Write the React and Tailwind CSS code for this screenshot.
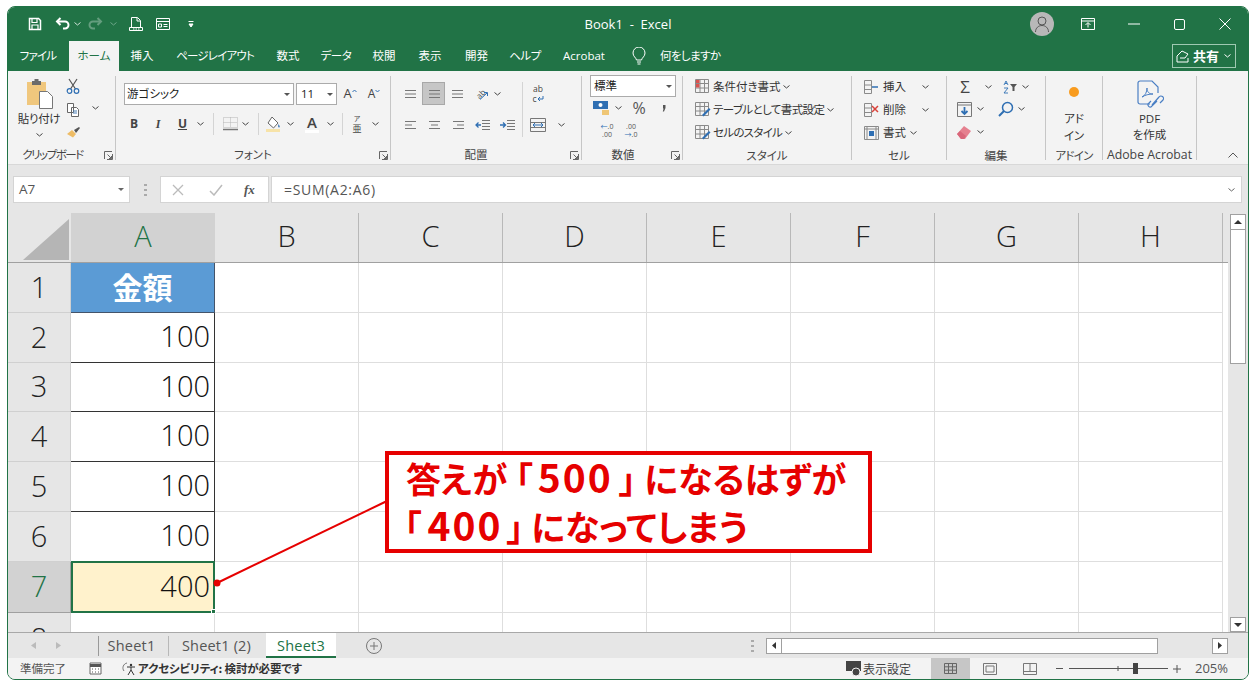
import clsx from 'clsx';

const UI_FONT = "font-['Open_Sans','Noto_Sans_CJK_JP',sans-serif]";
const JP_FONT = "font-['Noto_Sans_CJK_JP',sans-serif]";

const TABS = [
  { t: 'ファイル', w: 'w-[56px] tracking-[-0.8px]' },
  { t: 'ホーム', w: 'w-[50px] ml-[3px] bg-[#f3f3f3] text-[#217346]' },
  { t: '挿入', w: 'w-[46px]' },
  { t: 'ページレイアウト', w: 'w-[100px] tracking-[-0.8px]' },
  { t: '数式', w: 'w-[46px]' },
  { t: 'データ', w: 'w-[50px] tracking-[-0.4px]' },
  { t: '校閲', w: 'w-[46px]' },
  { t: '表示', w: 'w-[46px]' },
  { t: '開発', w: 'w-[47px]' },
  { t: 'ヘルプ', w: 'w-[50px] tracking-[-0.4px]' },
  { t: 'Acrobat', w: 'w-[68px]' },
];
const COLS = ['B', 'C', 'D', 'E', 'F', 'G', 'H'];
const ROWS = [
  { n: 1, h: 'h-[50px]' }, { n: 2, h: 'h-[50px]' }, { n: 3, h: 'h-[49px]' }, { n: 4, h: 'h-[50px]' },
  { n: 5, h: 'h-[50px]' }, { n: 6, h: 'h-[50px]' }, { n: 7, h: 'h-[51px]' },
];
const STYLE_ROWS = [
  { t: '条件付き書式', cond: true, c: '' },
  { t: 'テーブルとして書式設定', cond: false, c: 'tracking-[-0.6px]' },
  { t: 'セルのスタイル', cond: false, c: 'tracking-[-0.7px]' },
];

function Svg({ w = 16, h = 16, children, className }) {
  return <svg width={w} height={h} viewBox={`0 0 ${w} ${h}`} fill="none" className={clsx('shrink-0', className)}>{children}</svg>;
}
function Chev({ className, color = '#444' }) {
  return (
    <span className={clsx('flex items-center justify-center shrink-0 w-[10px]', className)}>
      <svg width="7" height="4" viewBox="0 0 7 4" fill="none"><path d="M.5.5l3 2.5 3-2.5" stroke={color} strokeWidth="1" /></svg>
    </span>
  );
}
function Slot({ className, children }) {
  return <span className={clsx('flex items-center justify-center shrink-0', className)}>{children}</span>;
}
function Launcher() {
  return (
    <svg width="9" height="9" viewBox="0 0 9 9" fill="none" className="absolute right-[2px] bottom-[4px]">
      <path d="M.5 8V.5H8M8.5 3v5.5H3M3.5 3.5l4 4M5 7.5h2.5V5" stroke="#666" strokeWidth="1" />
    </svg>
  );
}
function Group({ className, label, launcher, children }) {
  return (
    <div className={clsx('relative flex flex-col shrink-0', className)}>
      <div className="h-[73px]">{children}</div>
      <div className="h-[21px] text-center text-[11.5px] leading-[24px] text-[#444] whitespace-nowrap">{label}</div>
      {launcher && <Launcher />}
    </div>
  );
}
const Sep = () => <div className="w-px h-[84px] self-center shrink-0 bg-[#c6c6c6]" />;
const MiniSep = ({ className }) => <div className={clsx('w-px h-[22px] shrink-0 bg-[#d4d4d4]', className)} />;

function Lines({ a = 2, b = 11, c = 2, d = 11, e = 2, f = 11 }) {
  return (
    <Svg w={14} h={12}>
      <path d={`M${a} 2.5h${b}M${c} 6h${d}M${e} 9.5h${f}`} stroke="#777" strokeWidth="1.2" />
    </Svg>
  );
}

function QuickBar() {
  return (
    <div className="flex items-center pl-[19px]">
      <Svg w={16} h={16}>
        <path d="M2.5 2.5h9l2 2v9h-11z" stroke="#fff" strokeWidth="1.5" />
        <path d="M5 3v3.5h5V3M5 13v-4h6v4" stroke="#fff" strokeWidth="1.2" />
      </Svg>
      <Svg w={16} h={16} className="ml-[12px]">
        <path d="M5.5 2L2 5.5 5.5 9" stroke="#fff" strokeWidth="2" />
        <path d="M2.5 5.5H10a3.5 3.5 0 010 7H8" stroke="#fff" strokeWidth="2" />
      </Svg>
      <Chev color="#cfe3d8" className="ml-[1px]" />
      <Svg w={16} h={16} className="ml-[5px] opacity-30">
        <path d="M10.5 2L14 5.5 10.5 9" stroke="#fff" strokeWidth="2" />
        <path d="M13.5 5.5H6a3.5 3.5 0 000 7h2" stroke="#fff" strokeWidth="2" />
      </Svg>
      <Chev color="#6fa78a" className="ml-[5px]" />
      <Svg w={16} h={16} className="ml-[10px]">
        <path d="M3.5 11V1.5h6l3 3V11M9 2v3h3" stroke="#fff" strokeWidth="1" />
        <path d="M1.5 11.5h13v3h-13z" stroke="#fff" strokeWidth="1" />
        <path d="M5 13h1.5M7.5 13h1.5M10 13h1.5" stroke="#fff" strokeWidth="1" />
      </Svg>
      <Svg w={16} h={14} className="ml-[11px]">
        <path d="M1.5 1.5h13v11h-13zM1.5 4.5h13M3.5 7h3v3h-3zM8.5 7.500h4M8.500 9.500h4" stroke="#fff" strokeWidth="1" />
      </Svg>
      <Svg w={6} h={8} className="ml-[17px]">
        <path d="M.5 1.500h5M1 4h4l-2 3z" stroke="#fff" strokeWidth="1" fill="#fff" />
      </Svg>
    </div>
  );
}

function WindowButtons() {
  return (
    <div className="flex items-center justify-end">
      <div className="w-[24px] h-[24px] rounded-full bg-[#b8b8b8] flex items-center justify-center mr-[27px]">
        <Svg w={16} h={18}>
          <circle cx="8" cy="6" r="4" stroke="#555" strokeWidth="1" />
          <path d="M1.500 17c0-4 3-6.500 6.500-6.500s6.500 2.500 6.500 6.500" stroke="#555" strokeWidth="1" />
        </Svg>
      </div>
      <Svg w={14} h={12} className="mr-[33px]">
        <path d="M.5.5h13v11H.5zM.5 3h13" stroke="#fff" strokeWidth="1" />
        <path d="M7 9.500V5M4.500 7L7 4.500 9.500 7" stroke="#fff" strokeWidth="1" />
      </Svg>
      <Svg w={12} h={2} className="mr-[34px]"><path d="M0 1h12" stroke="#fff" /></Svg>
      <Svg w={11} h={11} className="mr-[34px]"><rect x=".5" y=".5" width="10" height="10" rx="1.500" stroke="#fff" /></Svg>
      <Svg w={12} h={12} className="mr-[17px]"><path d="M.5.5l11 11M11.500.5l-11 11" stroke="#fff" /></Svg>
    </div>
  );
}

function ClipboardGroup() {
  return (
    <Group className="w-[107px]" label={<span className="inline-block pr-[18px] tracking-[-1.5px]">クリップボード</span>} launcher>
      <div className="flex pt-[7px]">
        <div className="ml-[9px] w-[44px] flex flex-col items-center">
          <Svg w={28} h={31} className="ml-[1px]">
            <path d="M1 4h19v23H1z" fill="#f0c77d" />
            <path d="M6 3h9v4H6z" fill="#6b6b6b" />
            <path d="M8.500 1h4v3h-4z" fill="#6b6b6b" />
            <path d="M13.500 13.500h8l5 5v12h-13z" fill="#fff" stroke="#777" />
          </Svg>
          <span className="text-[11.5px] leading-[15px] text-[#333] whitespace-nowrap mt-[2px] tracking-[-0.3px]">貼り付け</span>
          <Chev className="mt-[7px]" />
        </div>
        <div className="ml-[2px] w-[20px] flex flex-col items-center gap-[9px]">
          <Svg w={14} h={16}>
            <path d="M3 1l6.500 10M11 1L4.500 11" stroke="#555" strokeWidth="1.200" />
            <circle cx="3.500" cy="13" r="2.300" stroke="#2f6fb3" strokeWidth="1.200" />
            <circle cx="10.500" cy="13" r="2.300" stroke="#2f6fb3" strokeWidth="1.200" />
          </Svg>
          <Svg w={14} h={14}>
            <path d="M1.500.5h6v9h-6zM5.500 4.500h5l2 2v7h-7z" fill="#fff" stroke="#666" />
            <path d="M7 8h4M7 10h4" stroke="#4a7fb5" />
          </Svg>
          <Svg w={15} h={12}>
            <path d="M1 8l5-4 4 4-3 3.500z" fill="#eebc65" />
            <path d="M8 4l5-3 1 1-4 5z" fill="#555" />
          </Svg>
        </div>
        <Chev className="ml-[7px] h-[4px] mt-[28px]" />
      </div>
    </Group>
  );
}

function FontSelect({ className, label }) {
  return (
    <div className={clsx('h-[22px] bg-white border border-[#ababab] flex items-center justify-between pl-[2px] pr-[3px] shrink-0', className)}>
      <span className="text-[11.500px] text-[#222]">{label}</span>
      <svg width="6" height="3" viewBox="0 0 6 3"><path d="M0 0h6L3 3z" fill="#555" /></svg>
    </div>
  );
}

function FontGroup() {
  return (
    <Group className="w-[274px]" label="フォント" launcher>
      <div className="flex items-center pl-[8px] pt-[12px]">
        <FontSelect className="w-[170px]" label="游ゴシック" />
        <FontSelect className="w-[41px] ml-[2px] pl-[4px]" label="11" />
        <Slot className="w-[24px] ml-[1px] text-[13px] text-[#444]">
          A
          <Svg w={5} h={10}><path d="M.5 3L2.500 1l2 2" stroke="#2f6fb3" /></Svg>
        </Slot>
        <Slot className="w-[24px] text-[12px] text-[#444]">
          A
          <Svg w={5} h={10}><path d="M.5 1l2 2 2-2" stroke="#2f6fb3" /></Svg>
        </Slot>
      </div>
      <div className="flex items-center pl-[6px] mt-[8px] h-[22px] text-[#444]">
        <Slot className="w-[24px] text-[12px] font-bold">B</Slot>
        <Slot className="w-[24px] text-[12px] italic font-bold font-['Liberation_Serif',serif]">I</Slot>
        <Slot className="w-[25px] text-[12px] font-bold underline">U</Slot>
        <Chev />
        <MiniSep className="ml-[8px]" />
        <Slot className="w-[20px] ml-[6px]">
          <Svg w={15} h={14}>
            <path d="M.5.500h14v10H.5zM7.500.500v10M.5 5.500h14" stroke="#b4b4b4" strokeDasharray="1 1" />
            <path d="M0 12.500h15" stroke="#777" strokeWidth="1.500" />
          </Svg>
        </Slot>
        <Chev />
        <MiniSep className="ml-[8px]" />
        <Slot className="w-[20px] ml-[4px]">
          <Svg w={17} h={17}>
            <path d="M7 1l6 6-4.500 5L3 7z" fill="#fff" stroke="#666" />
            <path d="M13.500 8c1.500 2 1.500 3.500.5 3.500S13 10 13.500 8z" fill="#2f6fb3" />
            <path d="M1 14.500h14" stroke="#f7e3a8" strokeWidth="3" />
          </Svg>
        </Slot>
        <Chev className="ml-[2px]" />
        <Slot className="w-[20px] ml-[7px] flex-col">
          <span className="text-[15px] leading-[15px] font-semibold">A</span>
          <span className="w-[14px] h-[3px] bg-white" />
        </Slot>
        <Chev className="ml-[3px]" />
        <MiniSep className="ml-[7px]" />
        <Slot className="w-[20px] ml-[4px] flex-col">
          <span className="text-[7px] leading-[9px]">ア</span>
          <span className="text-[9px] leading-[11px]">亜</span>
        </Slot>
        <Chev className="ml-[3px]" />
      </div>
    </Group>
  );
}

function IndentIcon({ flip }) {
  return (
    <Svg w={15} h={12}>
      <path d="M7 1.500h8M7 4.500h8M7 7.500h8M7 10.500h8" stroke="#777" />
      <path d={flip ? 'M0 6h5M3 3.500L5.500 6 3 8.500' : 'M1 6h5M3.500 3.500L1 6l2.500 2.500'} stroke="#2f6fb3" strokeWidth="1.300" />
    </Svg>
  );
}

function AlignGroup() {
  return (
    <Group className="w-[190px]" label={<span className="inline-block pr-[20px]">配置</span>} launcher>
      <div className="flex items-start pt-[11px] pl-[7px]">
        <div className="flex flex-col">
          <div className="flex items-center h-[23px]">
            <Slot className="w-[24px]"><Lines /></Slot>
            <Slot className="w-[23px] h-[23px] bg-[#c6c6c6] border border-[#a8a8a8]"><Lines /></Slot>
            <Slot className="w-[24px]"><Lines /></Slot>
            <Slot className="w-[24px]">
              <span className="relative flex items-center justify-center w-[16px] h-[14px]">
                <span className="-rotate-45 text-[8px] leading-none text-[#555]">ab</span>
                <Svg w={16} h={14} className="absolute left-0 top-0"><path d="M7 12.500L14 6M11 5.500h3.500V9" stroke="#2f6fb3" /></Svg>
              </span>
            </Slot>
            <Chev className="-ml-[1px]" />
          </div>
          <div className="flex items-center h-[23px] mt-[8px]">
            <Slot className="w-[24px]"><Lines b={11} d={7} f={11} /></Slot>
            <Slot className="w-[24px]"><Lines c={4} d={7} /></Slot>
            <Slot className="w-[24px]"><Lines c={6} d={7} /></Slot>
            <Slot className="w-[25px]"><IndentIcon /></Slot>
            <Slot className="w-[24px]"><IndentIcon flip /></Slot>
          </div>
        </div>
        <div className="w-px h-[55px] bg-[#d4d4d4] ml-[3px] shrink-0" />
        <div className="flex flex-col ml-[5px]">
          <Slot className="w-[20px] h-[23px] flex-col text-[8.500px] leading-[10px] text-[#444]">
            <span>ab</span>
            <span className="flex items-center">
              c
              <Svg w={7} h={7}><path d="M6 1v3H1M3 2L1 4l2 2" stroke="#2f6fb3" /></Svg>
            </span>
          </Slot>
          <div className="flex items-center h-[23px] mt-[8px]">
            <Slot className="w-[20px]">
              <Svg w={16} h={14}><path d="M.5.500h15v13H.5zM.5 4.500h15M.5 9.500h15" stroke="#777" /><path d="M3 7h10M5 5l-2 2 2 2M11 5l2 2-2 2" stroke="#2f6fb3" /></Svg>
            </Slot>
            <Chev className="ml-[8px]" />
          </div>
        </div>
      </div>
    </Group>
  );
}

function NumberGroup() {
  return (
    <Group className="w-[100px]" label={<span className="inline-block pr-[18px]">数値</span>} launcher>
      <div className="pt-[4px] pl-[8px]">
        <FontSelect className="w-[86px] pl-[3px]" label="標準" />
        <div className="flex items-center h-[20px] mt-[1px] -ml-[7px]">
          <Slot className="w-[20px] ml-[8px]">
            <Svg w={17} h={16}>
              <path d="M0 1h15v8H0z" fill="#2f6fb3" />
              <circle cx="7.500" cy="5" r="2" fill="#fff" />
              <path d="M9 10h7v5H9z" fill="#efc675" />
            </Svg>
          </Slot>
          <Chev className="ml-[2px]" />
          <Slot className="w-[20px] ml-[6px] text-[16px] text-[#555]">%</Slot>
          <Slot className="w-[14px] ml-[8px]">
            <Svg w={4} h={7}><path d="M1 0h2.500v3L2 6.500H.8L1.600 3.500H1z" fill="#555" /></Svg>
          </Slot>
        </div>
        <div className="flex items-center h-[20px] mt-[3px] text-[7px] leading-[8px] text-[#555] -ml-[7px]">
          <Slot className="w-[20px] ml-[14px] flex-col"><span><span className="text-[#2f6fb3]">←</span>.0</span><span>.00</span></Slot>
          <Slot className="w-[20px] ml-[4px] flex-col"><span>.00</span><span><span className="text-[#2f6fb3]">→</span>.0</span></Slot>
        </div>
      </div>
    </Group>
  );
}

function StyleIcon({ cond }) {
  return (
    <Svg w={16} h={15}>
      <path d="M.5.500h13v13H.5zM.5 4.500h13M.5 9h13M5 .500v13M9.500.500v13" stroke="#8a8a8a" />
      {cond ? <path d="M1 1h3.500v3H1zM1 5h3.500v3.500H1z" fill="#d9534f" /> : <path d="M7 13l7-7 1.500 1.500-7 7z" fill="#2f6fb3" />}
    </Svg>
  );
}

function StyleGroup() {
  return (
    <Group className="w-[168px]" label="スタイル">
      <div className="flex flex-col pt-[4px] pl-[12px] text-[11.500px] text-[#333]">
        {STYLE_ROWS.map((r) => (
          <div key={r.t} className="flex items-center h-[23px] whitespace-nowrap">
            <StyleIcon cond={r.cond} />
            <span className={clsx('ml-[2px]', r.c)}>{r.t}</span>
            <Chev className="ml-[1px]" />
          </div>
        ))}
      </div>
    </Group>
  );
}

function CellGroup() {
  return (
    <Group className="w-[94px]" label="セル">
      <div className="flex flex-col pt-[4px] pl-[12px] text-[11.500px] text-[#333]">
        <div className="flex items-center h-[23px]">
          <Svg w={15} h={14}><path d="M.5.500h7v13h-7zM.5 5h7M.5 9.500h7" stroke="#8a8a8a" /><path d="M8 7h6" stroke="#2f6fb3" strokeWidth="1.500" /></Svg>
          <span className="ml-[4px]">挿入</span><Chev className="ml-[14px]" />
        </div>
        <div className="flex items-center h-[23px]">
          <Svg w={15} h={14}><path d="M.5.500h7v13h-7zM.5 5h7M.5 9.500h7" stroke="#8a8a8a" /><path d="M8 3l6 6M14 3L8 9" stroke="#d9433b" strokeWidth="1.500" /></Svg>
          <span className="ml-[4px]">削除</span><Chev className="ml-[14px]" />
        </div>
        <div className="flex items-center h-[23px]">
          <Svg w={15} h={14}><path d="M.5.500h14v13H.5zM.5 3h14M3 .500v13M12 .500v13" stroke="#8a8a8a" /><path d="M5 5h5v5H5z" fill="#2f6fb3" /></Svg>
          <span className="ml-[4px]">書式</span><Chev className="ml-[2px]" />
        </div>
      </div>
    </Group>
  );
}

function EditGroup() {
  return (
    <Group className="w-[98px]" label="編集">
      <div className="flex flex-col pt-[4px] pl-[10px]">
        <div className="flex items-center h-[23px]">
          <Slot className="w-[16px] text-[17px] leading-none text-[#444]">Σ</Slot>
          <Chev className="ml-[10px]" />
          <Svg w={16} h={14} className="ml-[10px]">
            <path d="M1 5l2-4 2 4M2 3.500h2M1 8h4l-4 5h4" stroke="#2f6fb3" strokeWidth=".9" />
            <path d="M7 4h7l-2.500 3v4h-2V7z" fill="#555" />
          </Svg>
          <Chev className="ml-[1px]" />
        </div>
        <div className="flex items-center h-[22px]">
          <Svg w={15} h={15}>
            <path d="M.5.500h14v14H.5z" stroke="#777" />
            <path d="M.5 3h14" stroke="#777" />
            <path d="M7.500 5v7M4.500 9l3 3 3-3" stroke="#2f6fb3" strokeWidth="1.800" />
          </Svg>
          <Chev className="ml-[3px]" />
          <Svg w={16} h={16} className="ml-[13px]">
            <circle cx="9.500" cy="6.500" r="5" stroke="#2f6fb3" strokeWidth="1.500" />
            <path d="M6 10l-5 5" stroke="#2f6fb3" strokeWidth="2" />
          </Svg>
          <Chev className="ml-[2px]" />
        </div>
        <div className="flex items-center h-[24px]">
          <Svg w={15} h={13}>
            <path d="M0 8l7-8 7 5-6 8H4z" fill="#e5808f" />
            <path d="M0 8l3-3 6 5-2 3H4z" fill="#d9667a" />
          </Svg>
          <Chev className="ml-[3px]" />
        </div>
      </div>
    </Group>
  );
}

function AddinGroup() {
  return (
    <Group className="w-[56px]" label={<span className="tracking-[-0.8px]">アドイン</span>}>
      <div className="flex flex-col items-center text-[11.500px] leading-[17px] text-[#333]">
        <span className="w-[10px] h-[10px] rounded-full bg-[#f89b1e] mt-[16px] mb-[13px]" />
        <span>アド</span>
        <span>イン</span>
      </div>
    </Group>
  );
}

function AcrobatGroup() {
  return (
    <Group className="w-[93px]" label={<span className={clsx(UI_FONT, 'text-[12.300px]')}>Adobe Acrobat</span>}>
      <div className="flex flex-col items-center text-[11.500px] leading-[16px] text-[#333]">
        <Svg w={27} h={29} className="mt-[9px] mb-[2px] ml-[2px]">
          <path d="M13 24H3a2 2 0 01-2-2V3a2 2 0 012-2h12l6 6v6" stroke="#4a7fc4" strokeWidth="1.200" />
          <path d="M5 17c3-1 5-5 5-9 0 4 2 6 6 6-4 0-8 1-11 3z" stroke="#4a7fc4" />
          <path d="M15 25l7-8a2.500 2.500 0 014 3l-3 3M20 21l-6 6a2.500 2.500 0 01-3-3l3-3" stroke="#4a7fc4" strokeWidth="1.200" />
        </Svg>
        <span className={UI_FONT}>PDF</span>
        <span>を作成</span>
      </div>
    </Group>
  );
}

function FormulaBar() {
  return (
    <div className="h-[48px] bg-[#e6e6e6] flex pt-[11px] pl-[5px] pr-[6px] shrink-0">
      <div className="w-[117px] h-[27px] bg-white border border-[#d4d4d4] flex items-center justify-between px-[5px] text-[13.500px] text-[#555]">
        <span>A7</span>
        <svg width="6" height="3" viewBox="0 0 6 3"><path d="M0 0h6L3 3z" fill="#666" /></svg>
      </div>
      <div className="w-[30px] h-[27px] flex items-center justify-center">
        <svg width="3" height="12" viewBox="0 0 3 12"><path d="M0 0h3v2H0zM0 5h3v2H0zM0 10h3v2H0z" fill="#aaa" /></svg>
      </div>
      <div className="w-[109px] h-[27px] bg-white border border-[#d4d4d4] flex items-center">
        <Svg w={12} h={12} className="ml-[11px]"><path d="M1 1l10 10M11 1L1 11" stroke="#bbb" strokeWidth="1.300" /></Svg>
        <Svg w={14} h={12} className="ml-[25px]"><path d="M1 7l4 4 8-10" stroke="#bbb" strokeWidth="1.500" /></Svg>
        <span className="ml-[21px] text-[13px] italic font-bold text-[#555] font-['Liberation_Serif',serif]">fx</span>
      </div>
      <div className="flex-1 h-[27px] ml-[2px] bg-white border border-[#d4d4d4] flex items-center justify-between pl-[12px] pr-[5px] text-[14px] tracking-[0.7px] text-[#555]">
        <span>=SUM(A2:A6)</span>
        <Chev color="#666" />
      </div>
    </div>
  );
}

function Callout() {
  return (
    <div className={clsx('absolute left-[377px] top-[238px] w-[487px] h-[102px] bg-white border-4 border-[#e60000] pl-[17px] text-[#e60000] text-[35px] leading-[46px] font-bold whitespace-nowrap', JP_FONT)}>
      <div className="-mt-[2px]">
        答えが<span className="ml-[8px]">「</span>
        <span className="ml-[5px] text-[39px] tracking-[2px]">500</span>
        <span className="ml-[6px]">」</span>
        <span className="ml-[8px]">になるはずが</span>
      </div>
      <div className="-ml-[2px]">
        「<span className="ml-[6px] text-[39px] tracking-[2px]">400</span>
        <span className="ml-[4px]">」</span>
        <span className="ml-[7px]">になってしまう</span>
      </div>
    </div>
  );
}

function SheetGrid() {
  return (
    <div className="relative flex-1 min-w-0 bg-white overflow-hidden">
      <div className="flex h-[50px] bg-[#e6e6e6] text-[29px] font-light text-[#222] border-b border-[#a0a0a0]">
        <div className="w-[63px] flex items-end justify-end pr-[2px] pb-[2px] shrink-0">
          <svg width="46" height="41" viewBox="0 0 46 41"><path d="M0 41L46 0v41z" fill="#b5b5b5" /></svg>
        </div>
        <div className="w-[144px] pb-[3px] bg-[#d2d2d2] text-[#217346] flex items-center justify-center shrink-0">A</div>
        {COLS.map((c) => (
          <div key={c} className="w-[144px] pb-[3px] flex items-center justify-center border-r border-[#b8b8b8] shrink-0">{c}</div>
        ))}
      </div>
      {ROWS.map((r) => (
        <div key={r.n} className={clsx('flex', r.h)}>
          <div className={clsx('w-[63px] pb-[2px] flex items-center justify-center shrink-0 text-[29px] font-light border-r border-b',
            r.n === 7 ? 'bg-[#d2d2d2] text-[#217346] border-[#a0a0a0]' : 'bg-[#e6e6e6] text-[#222] border-[#d0d0d0]')}>{r.n}</div>
          {r.n === 1 && (
            <div className={clsx('w-[144px] shrink-0 pb-[2px] flex items-center justify-center bg-[#5b9bd5] text-white text-[30px] font-bold border-r border-b border-[#44546a]', JP_FONT)}>金額</div>
          )}
          {r.n > 1 && r.n < 7 && (
            <div className="w-[144px] shrink-0 pb-[3px] flex items-center justify-end pr-[4px] text-[29px] font-light text-[#111] border-r border-b border-[#333]">100</div>
          )}
          {r.n === 7 && (
            <div className="relative w-[144px] shrink-0 pb-[3px] flex items-center justify-end pr-[3px] bg-[#fff2cc] text-[29px] font-light text-[#111] border-2 border-[#217346] -mt-px">
              400
              <span className="absolute -right-[3px] -bottom-[3px] w-[5px] h-[5px] bg-[#217346] border border-white" />
            </div>
          )}
          {COLS.map((c) => <div key={c} className="w-[144px] shrink-0 border-r border-b border-[#dedede]" />)}
        </div>
      ))}
      <div className="flex h-[30px]">
        <div className="w-[63px] bg-[#e6e6e6] border-r border-[#d0d0d0] text-center text-[29px] font-light text-[#222] shrink-0 leading-[50px]">8</div>
        <div className="w-[144px] border-r border-[#dedede] shrink-0" />
        {COLS.map((c) => <div key={c} className="w-[144px] shrink-0 border-r border-[#dedede]" />)}
      </div>

      <svg width="400" height="400" viewBox="0 0 400 400" className="absolute left-0 top-0 pointer-events-none">
        <path d="M379 288L209 370" stroke="#e60000" strokeWidth="2" />
        <circle cx="209" cy="370" r="3.500" fill="#e60000" />
      </svg>
      <Callout />
    </div>
  );
}

function VScroll() {
  return (
    <div className="w-[20px] shrink-0 bg-[#e6e6e6] flex flex-col items-start pl-[2px]">
      <div className="w-[16px] h-[16px] mt-px bg-white border border-[#a0a0a0] flex items-center justify-center">
        <svg width="8" height="4" viewBox="0 0 8 4"><path d="M0 4h8L4 0z" fill="#333" /></svg>
      </div>
      <div className="w-[16px] h-[134px] bg-white border border-[#a0a0a0] border-t-0" />
      <div className="flex-1" />
      <div className="w-[16px] h-[15px] bg-white border border-[#a0a0a0] flex items-center justify-center">
        <svg width="8" height="4" viewBox="0 0 8 4"><path d="M0 0h8L4 4z" fill="#333" /></svg>
      </div>
    </div>
  );
}

function SheetTabs() {
  return (
    <div className="h-[26px] bg-[#e6e6e6] border-t border-[#a8a8a8] flex items-center shrink-0 text-[14.500px] tracking-[0.2px] text-[#555]">
      <div className="w-[90px] flex items-center pl-[23px] gap-[20px] shrink-0">
        <svg width="5" height="7" viewBox="0 0 5 7"><path d="M5 0v7L0 3.500z" fill="#bbb" /></svg>
        <svg width="5" height="7" viewBox="0 0 5 7"><path d="M0 0v7l5-3.500z" fill="#bbb" /></svg>
      </div>
      <div className="w-px h-[20px] bg-[#999]" />
      <div className="w-[69px] pr-[4px] text-center">Sheet1</div>
      <div className="w-px h-[20px] bg-[#b8b8b8]" />
      <div className="w-[97px] pr-[2px] text-center">Sheet1 (2)</div>
      <div className="w-[70px] h-[25px] -mt-px bg-white text-[#217346] text-center leading-[25px] border-b-2 border-[#217346]">Sheet3</div>
      <Svg w={16} h={16} className="ml-[30px]">
        <circle cx="8" cy="8" r="7.500" stroke="#777" />
        <path d="M4 8h8M8 4v8" stroke="#777" />
      </Svg>
      <div className="flex-1" />
      <svg width="3" height="12" viewBox="0 0 3 12" className="mr-[12px]"><path d="M0 0h3v2H0zM0 5h3v2H0zM0 10h3v2H0z" fill="#aaa" /></svg>
      <div className="flex w-[462px] h-[16px] mr-[20px]">
        <div className="w-[16px] bg-white border border-[#a0a0a0] flex items-center justify-center">
          <svg width="4" height="7" viewBox="0 0 4 7"><path d="M4 0v7L0 3.500z" fill="#333" /></svg>
        </div>
        <div className="w-[376px] bg-white border border-[#a0a0a0] border-l-0" />
        <div className="flex-1" />
        <div className="w-[16px] bg-white border border-[#a0a0a0] flex items-center justify-center">
          <svg width="4" height="7" viewBox="0 0 4 7"><path d="M0 0v7l4-3.500z" fill="#333" /></svg>
        </div>
      </div>
    </div>
  );
}

function StatusBar() {
  return (
    <div className={clsx('h-[21px] bg-[#f3f3f3] flex items-center text-[11.500px] text-[#555] shrink-0', JP_FONT)}>
      <span className="ml-[12px] w-[48px] whitespace-nowrap">準備完了</span>
      <Svg w={13} h={13} className="ml-[21px]">
        <path d="M1 1h11v11H1z" fill="#fff" stroke="#666" />
        <path d="M1 3.500h11" stroke="#555" strokeWidth="3" />
        <path d="M3 7h1M6 7h1M9 7h1M3 10h1M6 10h1M9 10h1" stroke="#555" />
      </Svg>
      <Svg w={16} h={15} className="ml-[19px]">
        <path d="M6 2a5 5 0 00-3 8" stroke="#777" />
        <circle cx="10" cy="4" r="1.200" fill="#333" />
        <path d="M6 6h8M10 6v3l-3 5M10 9l3 5" stroke="#333" />
      </Svg>
      <span className="ml-[1px] font-bold text-[#333] whitespace-nowrap tracking-[-0.15px]">アクセシビリティ: 検討が必要です</span>
      <div className="flex-1" />
      <Svg w={17} h={16}>
        <path d="M0 0h15v10H0z" fill="#444" />
        <circle cx="10" cy="11" r="4" fill="#444" stroke="#f3f3f3" />
      </Svg>
      <span className="w-[49px] text-[12px] whitespace-nowrap text-[#444]">表示設定</span>
      <div className="w-[39px] h-[21px] ml-[19px] bg-[#c6c6c6] flex items-center justify-center">
        <Svg w={13} h={11}><path d="M.5.500h12v10H.5zM4.500.500v10M8.500.500v10M.5 3.800h12M.5 7.200h12" stroke="#666" /></Svg>
      </div>
      <Svg w={14} h={12} className="ml-[13px]"><path d="M.5.500h13v11H.5zM3 3h8v6H3z" stroke="#777" /></Svg>
      <Svg w={14} h={12} className="ml-[26px]"><path d="M.5.500h13v11H.5zM.5 8.500h13M7 .500v8" stroke="#777" /></Svg>
      <Svg w={112} h={11} className="ml-[19px]">
        <path d="M0 5.500h7M13 5.500h99" stroke="#555" />
        <path d="M62 3v5" stroke="#555" />
        <path d="M77 0h5v11h-5z" fill="#444" />
      </Svg>
      <Svg w={8} h={8} className="ml-[5px]"><path d="M0 4h8M4 0v8" stroke="#555" /></Svg>
      <span className={clsx('ml-[14px] mr-[20px] text-[13px] w-[33px] whitespace-nowrap', UI_FONT)}>205%</span>
    </div>
  );
}

export default function App() {
  return (
    <div className={clsx('w-[1257px] h-[688px] bg-white pl-[7px] pt-[6px] overflow-hidden [font-feature-settings:"palt"]', UI_FONT)}>
      <div className="w-[1242px] h-[674px] flex flex-col rounded-[8px] overflow-hidden border border-[#217346] bg-[#e6e6e6]">
        <div className="h-[34px] bg-[#217346] grid grid-cols-[1fr_auto_1fr] items-center shrink-0">
          <QuickBar />
          <span className="text-[13px] pt-px text-white whitespace-pre">Book1  -  Excel</span>
          <WindowButtons />
        </div>
        <div className={clsx('h-[30px] bg-[#217346] flex items-end text-[11.500px] text-white shrink-0 pl-[2px]', UI_FONT)}>
          {TABS.map((tab) => (
            <div key={tab.t} className={clsx('h-[30px] flex items-center justify-center whitespace-nowrap shrink-0', tab.w)}>{tab.t}</div>
          ))}
          <Svg w={14} h={18} className="ml-[14px] self-center">
            <path d="M4.500 13C4 10.500 1 9.500 1 6a6 6 0 0112 0c0 3.500-3 4.500-3.500 7zM5 15h4M5.500 17h3" stroke="#fff" />
          </Svg>
          <span className="ml-[14px] self-center tracking-[-0.6px]">何をしますか</span>
          <div className="flex-1" />
          <div className="w-[64px] h-[24px] mb-[3px] mr-[12px] border border-[#9fc9b2] flex items-center justify-center gap-[3px] text-[13px] font-bold">
            <Svg w={14} h={13}><path d="M1 6v6h11V8M1 6l5-5 6 3-3 4H4" stroke="#fff" /></Svg>
            <span className={JP_FONT}>共有</span>
            <Chev color="#fff" />
          </div>
        </div>
        <div className="h-[94px] bg-[#f3f3f3] flex shrink-0 border-b border-[#d8d8d8]">
          <ClipboardGroup /><Sep />
          <FontGroup /><Sep />
          <AlignGroup /><Sep />
          <NumberGroup /><Sep />
          <StyleGroup /><Sep />
          <CellGroup /><Sep />
          <EditGroup /><Sep />
          <AddinGroup /><Sep />
          <AcrobatGroup /><Sep />
          <div className="flex-1 flex items-end justify-end pr-[10px] pb-[6px]">
            <svg width="10" height="6" viewBox="0 0 10 6" fill="none"><path d="M.5 5.500L5 1l4.500 4.500" stroke="#555" /></svg>
          </div>
        </div>
        <FormulaBar />
        <div className="flex-1 min-h-0 flex">
          <SheetGrid />
          <VScroll />
        </div>
        <SheetTabs />
        <StatusBar />
      </div>
    </div>
  );
}
